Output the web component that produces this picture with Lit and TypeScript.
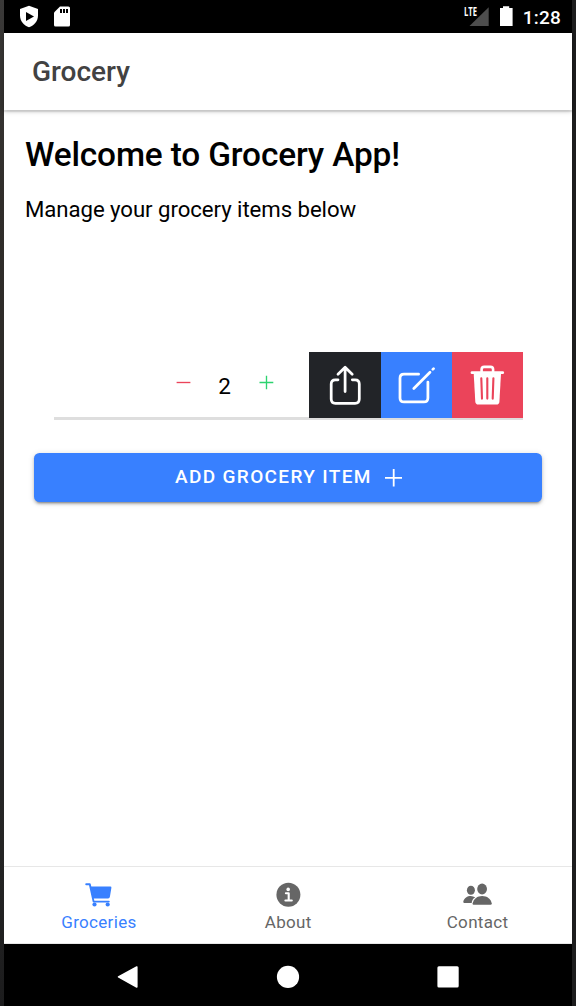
import { LitElement, html, css, svg } from "lit";
import { customElement, property, state } from "lit/decorators.js";
import { classMap } from "lit/directives/class-map.js";

const cartIcon = svg`
  <path d="M1.2 2.2H4.8L8.6 19.6H23.8" fill="none" stroke="currentColor" stroke-width="1.9" stroke-linecap="round" stroke-linejoin="round"/>
  <path d="M5.6 4.6H25.4Q26.6 4.6 26.4 5.8L24.9 14.8Q24.6 16.4 23.1 16.4H8.2Z" fill="currentColor"/>
  <circle cx="9.5" cy="22.5" r="2.1" fill="currentColor"/>
  <circle cx="22.7" cy="22.5" r="2.1" fill="currentColor"/>`;

const infoIcon = svg`
  <circle cx="14.4" cy="12.8" r="12" fill="currentColor"/>
  <circle cx="14.2" cy="7.4" r="1.8" fill="#fff"/>
  <path d="M11.9 11.2H14.7V18.4M11.4 18.5H17.8" fill="none" stroke="#fff" stroke-width="2.1" stroke-linecap="round" stroke-linejoin="round"/>`;

const peopleIcon = svg`
  <ellipse cx="8.9" cy="8.2" rx="4" ry="4.5" fill="currentColor"/>
  <path d="M13.2 15.4C10.6 16.7 9.9 18.8 9.7 20.9H2.2Q1 20.9 1.3 19.6C2.2 15.8 5.3 13.9 8.8 13.9Q11.3 13.9 13.2 15.4Z" fill="currentColor"/>
  <ellipse cx="20.1" cy="7" rx="4.9" ry="5.4" fill="currentColor"/>
  <path d="M20.1 14.1C25 14.1 28.8 16.9 29.7 21.3Q29.9 22.8 28.6 22.8H11.6Q10.4 22.8 10.7 21.3C11.6 16.9 15.5 14.1 20.1 14.1Z" fill="currentColor"/>`;

@customElement("status-bar")
class StatusBar extends LitElement {
  static styles = css`
    :host { display: flex; height: 33px; background: #000; color: #fff; }
    svg { display: block; flex: none; }
    .left { padding-left: 14px; }
    .right { display: flex; margin-left: auto; padding-right: 11px; }
    .lte { font: 700 12.5px/12px "Open Sans", Roboto, sans-serif; }
    .time { font: 500 19px/35px Roboto, sans-serif; letter-spacing: 0.2px; margin-left: 9px; }
  `;
  render() {
    return html`
      <svg class="left" width="60" height="33" viewBox="18 0 60 33">
        <path d="M29 5.8L38 9V15.5C38 21 34.2 25.6 29 27.2C23.8 25.6 20 21 20 15.5V9Z" fill="#fff"/>
        <path d="M26 12V21L34 16.4Z" fill="#000"/>
        <path d="M60 6.5H68.4Q70 6.5 70 8.1V25Q70 26.6 68.4 26.6H55.6Q54 26.6 54 25V12.5Z" fill="#fff"/>
        <path d="M60 9h2v4h-2zM63 9h2v4h-2zM66 9h2v4h-2z" fill="#000"/>
      </svg>
      <div class="right">
        <svg width="54" height="33" viewBox="460 0 54 33">
          <path d="M488.7 7.3V26H469.5Z" fill="#4d4d4d"/>
          <text class="lte" x="464" y="16" textLength="13" lengthAdjust="spacingAndGlyphs" fill="#fff">LTE</text>
          <path d="M503 6.2H509.2V8H512.6V26H500V8H503Z" fill="#fff"/>
        </svg>
        <span class="time">1:28</span>
      </div>`;
  }
}

@customElement("grocery-item")
class GroceryItem extends LitElement {
  @property({ type: Number }) quantity = 2;

  static styles = css`
    :host { display: flex; height: 68px; }
    .item { width: 255px; box-sizing: border-box; border-bottom: 3px solid #dedede; display: flex; align-items: center; padding-left: 121px; }
    button { border: 0; padding: 0; background: none; display: block; color: inherit; }
    svg { display: block; }
    .step { width: 16px; height: 16px; margin-bottom: 5px; }
    .count { width: 67px; text-align: center; font-size: 22.5px; line-height: 28px; padding-top: 3px; }
    .minus { color: #eb445a; }
    .plus { color: #2dd36f; }
    .options { display: flex; height: 66px; color: #fff; box-shadow: 0 2px 0 #dedede; }
    .share { width: 72px; background: #222428; }
    .edit { width: 71px; background: #3880ff; }
    .delete { width: 71px; background: #eb445a; }
  `;
  render() {
    return html`
      <div class="item">
        <button class="step minus" @click=${() => this.quantity--}>
          <svg width="16" height="16"><path d="M1.6 8.5H15.4" stroke="currentColor" stroke-width="1.35"/></svg>
        </button>
        <span class="count">${this.quantity}</span>
        <button class="step plus" @click=${() => this.quantity++}>
          <svg width="16" height="16"><path d="M1.5 8.5H15.3M8.5 1.7V15.3" stroke="currentColor" stroke-width="1.35"/></svg>
        </button>
      </div>
      <div class="options">
        <button class="share">
          <svg width="72" height="66" viewBox="309 352 72 66" fill="none" stroke="currentColor" stroke-width="2.75" stroke-linecap="round" stroke-linejoin="round">
            <path d="M338 379.8H335.4Q331.2 379.8 331.2 384V399Q331.2 403.3 335.4 403.3H355.1Q359.3 403.3 359.3 399V384Q359.3 379.8 355.1 379.8H352.3"/>
            <path d="M338 374.2L345.1 367.2L352.2 374.2M345.1 367.5V391.5"/>
          </svg>
        </button>
        <button class="edit">
          <svg width="71" height="66" viewBox="381 352 71 66" fill="none" stroke="currentColor" stroke-width="2.75" stroke-linecap="round" stroke-linejoin="round">
            <path d="M418.6 374.2H404Q400 374.2 400 378.3V397.9Q400 401.9 404 401.9H423.9Q427.9 401.9 427.9 397.9V382"/>
            <path d="M413.8 388.5L430 372.2M432.8 369.4L433.6 368.6"/>
          </svg>
        </button>
        <button class="delete">
          <svg width="71" height="66" viewBox="452 352 71 66">
            <path d="M472 372.7H502.7" fill="none" stroke="#fff" stroke-width="2.8" stroke-linecap="round"/>
            <path d="M481.6 372V369.5Q481.6 366.9 484.2 366.9H490.5Q493.1 366.9 493.1 369.5V372" fill="none" stroke="#fff" stroke-width="2.6"/>
            <path d="M473.7 373.5H501L499.4 401.8Q499.2 404.6 496.4 404.6H478.4Q475.6 404.6 475.3 401.8Z" fill="#fff"/>
            <path d="M481.3 378.2L482 398.6M487.3 378.2V398.6M493.4 378.2L492.7 398.6" stroke="#eb445a" stroke-width="2.1" stroke-linecap="round"/>
          </svg>
        </button>
      </div>`;
  }
}

@customElement("app-root")
class AppRoot extends LitElement {
  @state() private active = "Groceries";

  static styles = css`
    :host { display: flex; height: 1006px; box-sizing: border-box; background: #1d1d1e; font-family: Roboto, sans-serif; overflow: hidden; }
    .edge { width: 4px; background: linear-gradient(#3a3938, #302d2a 20%, #242424 85%, #1c1c1d); }
    .screen { width: 568px; display: flex; flex-direction: column; background: #fff; color: #000; }
    .header { height: 77px; box-sizing: border-box; padding-left: 28px; color: #424242; font-size: 28px; font-weight: 500; line-height: 78px; box-shadow: 0 1px 5px rgba(0,0,0,.26), 0 2px 1px rgba(0,0,0,.08); }
    .content { flex: 1; display: flex; flex-direction: column; }
    h1 { margin: 23px 0 0 21px; font-size: 33.4px; line-height: 44px; font-weight: 500; letter-spacing: -.15px; white-space: nowrap; }
    .intro { margin: 17px 0 0 21px; font-size: 22.2px; line-height: 30px; letter-spacing: -.06px; white-space: nowrap; }
    .row { margin: 128px 0 0 50px; }
    .add { margin: 33px 29.6px 0 30.4px; padding: 0; height: 49.4px; border: 0; border-radius: 5.5px; background: #3880ff; color: #fff; font: 500 19px/48px Roboto, sans-serif; letter-spacing: 1.36px; display: flex; justify-content: center; align-items: center; box-shadow: 0 4px 2px -3px rgba(0,0,0,.25), 0 2px 3px rgba(0,0,0,.2), 0 1px 6px rgba(0,0,0,.14); }
    .add-label { margin: 0 13px 1px 0; white-space: nowrap; }
    .tabs { height: 78px; box-sizing: border-box; border-top: 1px solid #e7e7e7; border-bottom: 1px solid #e7e7e7; display: grid; grid-template-columns: repeat(3, 1fr); }
    .tab { border: 0; background: none; padding: 15px 0 0 .5px; display: flex; flex-direction: column; align-items: center; color: #666; font: 400 17px/22px Roboto, sans-serif; letter-spacing: .32px; }
    .selected { color: #3880ff; }
    .tab-label { margin-top: 3px; }
    svg { display: block; flex: none; }
    .nav { height: 62px; background: #000; display: flex; justify-content: center; gap: 136px; align-items: center; padding-top: 3px; box-sizing: border-box; }
  `;
  private tab(label: string, icon: unknown, width: number) {
    return html`
      <button class=${classMap({ tab: true, selected: this.active === label })} @click=${() => (this.active = label)}>
        <svg width=${width} height="26" viewBox="0 0 ${width} 26">${icon}</svg>
        <span class="tab-label">${label}</span>
      </button>`;
  }
  render() {
    return html`
      <div class="edge"></div>
      <div class="screen">
        <status-bar></status-bar>
        <div class="header">Grocery</div>
        <div class="content">
          <h1>Welcome to Grocery App!</h1>
          <div class="intro">Manage your grocery items below</div>
          <grocery-item class="row"></grocery-item>
          <button class="add">
            <span class="add-label">ADD GROCERY ITEM</span>
            <svg width="17" height="18"><path d="M0 8.8H17M8.7 0V17.5" stroke="#fff" stroke-width="1.8"/></svg>
          </button>
        </div>
        <div class="tabs">
          ${this.tab("Groceries", cartIcon, 27)}
          ${this.tab("About", infoIcon, 29)}
          ${this.tab("Contact", peopleIcon, 31)}
        </div>
        <div class="nav">
          <svg width="24" height="24"><path d="M2.5 11.9L20.8 2V22Z" fill="#fff" stroke="#fff" stroke-width="1.6" stroke-linejoin="round"/></svg>
          <svg width="24" height="24"><circle cx="12" cy="11.9" r="11.1" fill="#fff"/></svg>
          <svg width="24" height="24"><rect x="1.4" y="1.2" width="21.3" height="21.4" rx="1.5" fill="#fff"/></svg>
        </div>
      </div>`;
  }
}
